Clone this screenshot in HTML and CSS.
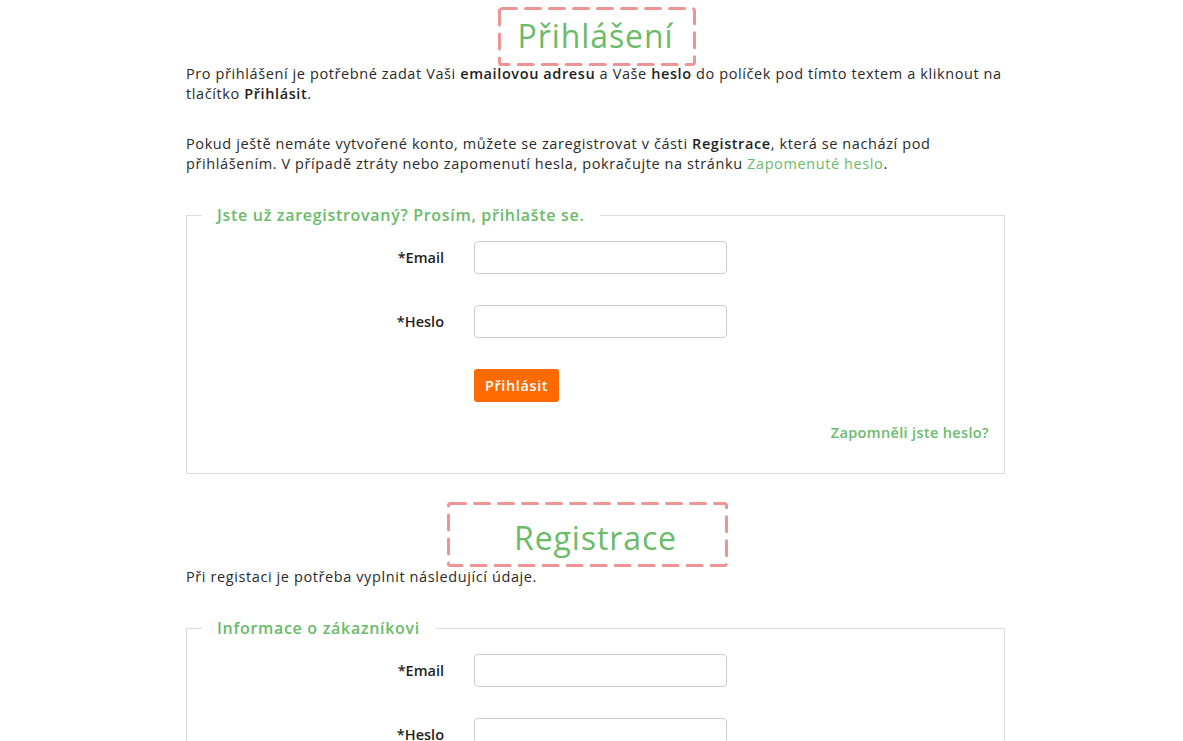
FILE: index.html
```html
<!DOCTYPE html>
<html lang="cs">
<head>
<meta charset="utf-8">
<title>Přihlášení</title>
<link rel="stylesheet" href="styles.css">
</head>
<body>
<main class="page">
  <h1 class="title">Přihlášení
    <svg class="mark mark-login" viewBox="0 0 198 59" aria-hidden="true"><rect x="1.5" y="1.5" width="195" height="56" rx="2"/></svg>
  </h1>
  <p class="text">Pro přihlášení je potřebné zadat Vaši <strong>emailovou adresu</strong> a Vaše <strong>heslo</strong> do políček pod tímto textem a kliknout na tlačítko <strong>Přihlásit</strong>.</p>
  <p class="text">Pokud ještě nemáte vytvořené konto, můžete se zaregistrovat v části <strong>Registrace</strong>, která se nachází pod přihlášením. V případě ztráty nebo zapomenutí hesla, pokračujte na stránku <a class="link" href="#">Zapomenuté heslo</a>.</p>

  <fieldset class="box">
    <legend class="box-title">Jste už zaregistrovaný? Prosím, přihlašte se.</legend>
    <div class="row">
      <label class="label" for="le">*Email</label>
      <input class="input" id="le" type="email">
    </div>
    <div class="row">
      <label class="label" for="lp">*Heslo</label>
      <input class="input" id="lp" type="password">
    </div>
    <div class="row row-end">
      <span></span>
      <button class="btn" type="button">Přihlásit</button>
    </div>
    <div class="forgot"><a class="link strong" href="#">Zapomněli jste heslo?</a></div>
  </fieldset>

  <h2 class="title title-reg">Registrace
    <svg class="mark mark-reg" viewBox="0 0 281 65" aria-hidden="true"><rect x="1.5" y="1.5" width="278" height="62" rx="2"/></svg>
  </h2>
  <p class="text text-reg">Při registaci je potřeba vyplnit následující údaje.</p>

  <fieldset class="box">
    <legend class="box-title">Informace o zákazníkovi</legend>
    <div class="row">
      <label class="label" for="re">*Email</label>
      <input class="input" id="re" type="email">
    </div>
    <div class="row">
      <label class="label" for="rp">*Heslo</label>
      <input class="input" id="rp" type="password">
    </div>
    <div class="row row-end">
      <label class="label" for="rp2">*Heslo znovu</label>
      <input class="input" id="rp2" type="password">
    </div>
  </fieldset>
</main>
</body>
</html>
```

FILE: styles.css
```css
* { box-sizing: border-box; }

html, body {
  margin: 0;
  padding: 0;
  background: #ffffff;
}

body {
  font-family: "Open Sans", "Liberation Sans", sans-serif;
  font-size: 14.5px;
  line-height: 20px;
  letter-spacing: 0.6px;
  color: #2a2a2a;
}

.page {
  width: 819px;
  margin-left: 186px;
  padding-top: 16px;
  padding-bottom: 40px;
}

.title {
  position: relative;
  margin: 0 0 8px;
  font-size: 32px;
  line-height: 40px;
  font-weight: 400;
  letter-spacing: 0.9px;
  color: #6abb6a;
  text-align: center;
}

.title-reg {
  margin-top: 44px;
  margin-bottom: 9px;
}

.mark {
  position: absolute;
  overflow: visible;
  fill: none;
  stroke: #ef9494;
  stroke-width: 3;
  stroke-dasharray: 15 9;
  stroke-linecap: round;
}

.mark-login {
  left: 312px;
  top: -9px;
  width: 198px;
  height: 59px;
}

.mark-reg {
  left: 261px;
  top: -16px;
  width: 281px;
  height: 65px;
}

.text {
  margin: 0 0 30px;
}

.text strong {
  font-weight: 600;
  color: #1f1f1f;
}

.link {
  color: #6abb6a;
  text-decoration: none;
}

.link.strong {
  font-weight: 600;
  letter-spacing: 0.35px;
}

.box {
  margin: 0;
  padding: 15px 15px 30px;
  border: 1px solid #dcdcdc;
  min-width: 0;
}

.box-title {
  padding: 0 15px;
  font-size: 16px;
  line-height: 22px;
  font-weight: 600;
  letter-spacing: 0.7px;
  color: #6abb6a;
}

.row {
  display: grid;
  grid-template-columns: 242px 253px;
  column-gap: 30px;
  align-items: center;
  margin-bottom: 31px;
}

.row-end {
  margin-bottom: 0;
}

.label {
  text-align: right;
  font-weight: 600;
  letter-spacing: 0;
  color: #1f1f1f;
}

.input {
  height: 33px;
  width: 253px;
  border: 1px solid #cccccc;
  border-radius: 4px;
  background: #ffffff;
  padding: 0 10px;
  font: inherit;
}

.btn {
  justify-self: start;
  height: 33px;
  padding: 0 11px;
  border: 0;
  border-radius: 3px;
  background: #ff6a00;
  color: #ffffff;
  font: inherit;
  font-weight: 600;
  letter-spacing: 0.6px;
}

.forgot {
  margin-top: 21px;
  text-align: right;
}
```
